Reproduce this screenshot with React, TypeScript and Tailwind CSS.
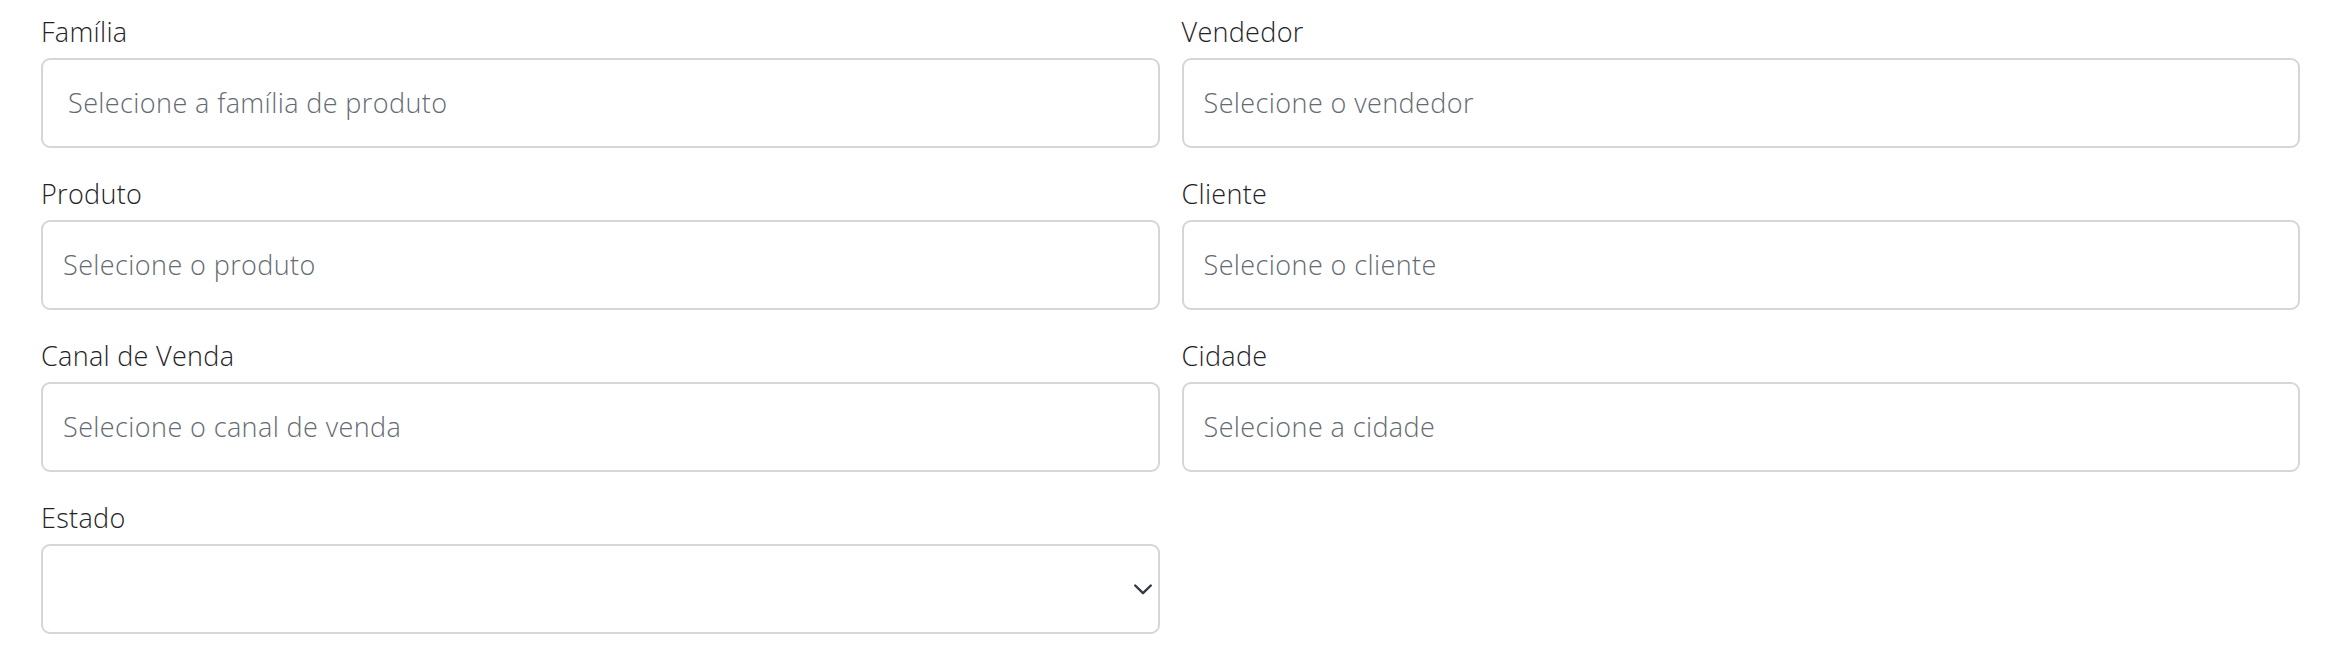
type Field = {
  label: string;
  placeholder?: string;
  indent?: string;
  select?: boolean;
};

const fields: Field[] = [
  { label: 'Família', placeholder: 'Selecione a família de produto', indent: 'pl-[25px]' },
  { label: 'Vendedor', placeholder: 'Selecione o vendedor' },
  { label: 'Produto', placeholder: 'Selecione o produto' },
  { label: 'Cliente', placeholder: 'Selecione o cliente' },
  { label: 'Canal de Venda', placeholder: 'Selecione o canal de venda' },
  { label: 'Cidade', placeholder: 'Selecione a cidade' },
  { label: 'Estado', select: true },
];

function Chevron() {
  return (
    <svg width="18" height="11" viewBox="0 0 18 11" fill="none" className="shrink-0">
      <path d="M1.2 1.5 L9 9.2 L16.8 1.5" stroke="#343a40" strokeWidth="2.4" strokeLinecap="round" strokeLinejoin="round" />
    </svg>
  );
}

function FilterField({ field }: { field: Field }) {
  return (
    <div className="flex flex-col">
      <label className="text-[27px] leading-[40px] font-light tracking-[0.3px] text-[#1f2328] mb-[6px]">
        {field.label}
      </label>
      <div
        className={`h-[90px] flex items-center border-2 border-[#d6d6d6] rounded-[9px] bg-white ${
          field.indent ?? 'pl-[20px]'
        } ${field.select ? 'justify-end pr-[6px]' : 'pr-4'}`}
      >
        {field.select ? (
          <Chevron />
        ) : (
          <span className="text-[27px] font-light tracking-[0.4px] text-[#646b73] whitespace-nowrap">
            {field.placeholder}
          </span>
        )}
      </div>
    </div>
  );
}

export default function App() {
  return (
    <div className="w-[2344px] h-[652px] bg-white overflow-hidden" style={{ fontFamily: '"Open Sans", "Noto Sans", sans-serif' }}>
      <div className="grid grid-cols-2 gap-x-[22px] gap-y-[26px] pl-[41px] pr-[44px] pt-[12px]">
        {fields.map((f) => (
          <FilterField key={f.label} field={f} />
        ))}
      </div>
    </div>
  );
}
